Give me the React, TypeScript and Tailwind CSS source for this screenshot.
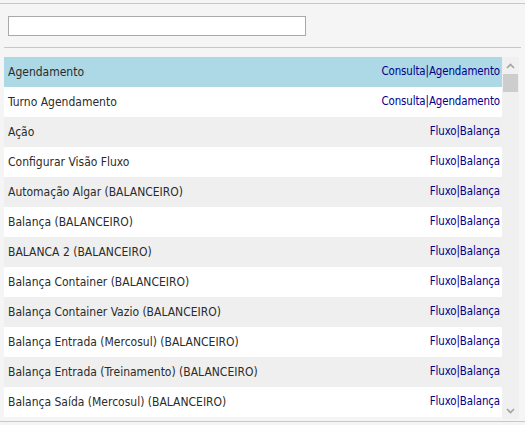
const rows: { label: string; links: [string, string] }[] = [
  { label: 'Agendamento', links: ['Consulta', 'Agendamento'] },
  { label: 'Turno Agendamento', links: ['Consulta', 'Agendamento'] },
  { label: 'Ação', links: ['Fluxo', 'Balança'] },
  { label: 'Configurar Visão Fluxo', links: ['Fluxo', 'Balança'] },
  { label: 'Automação Algar (BALANCEIRO)', links: ['Fluxo', 'Balança'] },
  { label: 'Balança (BALANCEIRO)', links: ['Fluxo', 'Balança'] },
  { label: 'BALANCA 2 (BALANCEIRO)', links: ['Fluxo', 'Balança'] },
  { label: 'Balança Container (BALANCEIRO)', links: ['Fluxo', 'Balança'] },
  { label: 'Balança Container Vazio (BALANCEIRO)', links: ['Fluxo', 'Balança'] },
  { label: 'Balança Entrada (Mercosul) (BALANCEIRO)', links: ['Fluxo', 'Balança'] },
  { label: 'Balança Entrada (Treinamento) (BALANCEIRO)', links: ['Fluxo', 'Balança'] },
  { label: 'Balança Saída (Mercosul) (BALANCEIRO)', links: ['Fluxo', 'Balança'] },
]

export default function App() {
  return (
    <div className="w-[525px] h-[425px] overflow-hidden bg-[#f5f5f5] font-['DejaVu_Sans_Condensed',sans-serif] text-[12px]">
      <div className="mt-[3px] border-t border-[#c8c8c8] pt-[12px] pb-[11px] px-[4px]">
        <input
          type="text"
          className="ml-[4px] block w-[298px] h-[20px] bg-white border border-[#a9a9a9] outline-none"
        />
      </div>
      <div className="mx-[4px] border-t border-[#c8c8c8]" />
      <div className="mt-[9px] ml-[4px] flex w-[515px] h-[362px]">
        <div className="flex-1 flex flex-col">
          {rows.map((r, i) => (
            <div
              key={r.label}
              className={`h-[30px] shrink-0 flex items-center justify-between pl-[4px] pr-[2px] ${
                i === 0 ? 'bg-[#add8e6]' : i % 2 === 1 ? 'bg-white' : 'bg-[#efefef]'
              }`}
            >
              <span className="text-[#2b2b2b]">{r.label}</span>
              <span className="text-[#00008b] text-[11.4px] tracking-[-0.1px]">
                <a className="cursor-pointer">{r.links[0]}</a>|<a className="cursor-pointer">{r.links[1]}</a>
              </span>
            </div>
          ))}
        </div>
        <div className="w-[17px] bg-[#f0f0f0] flex flex-col items-center">
          <div className="h-[17px] flex items-center justify-center">
            <svg width="9" height="6" viewBox="0 0 9 6">
              <path d="M1 5 L4.5 1.5 L8 5" fill="none" stroke="#a3a3a3" strokeWidth="1.6" />
            </svg>
          </div>
          <div className="w-[15px] h-[18px] bg-[#cdcdcd]" />
          <div className="flex-1" />
          <div className="h-[17px] flex items-center justify-center">
            <svg width="9" height="6" viewBox="0 0 9 6">
              <path d="M1 1 L4.5 4.5 L8 1" fill="none" stroke="#a3a3a3" strokeWidth="1.6" />
            </svg>
          </div>
        </div>
      </div>
      <div className="mt-[2px] border-t border-[#c8c8c8]" />
    </div>
  )
}
